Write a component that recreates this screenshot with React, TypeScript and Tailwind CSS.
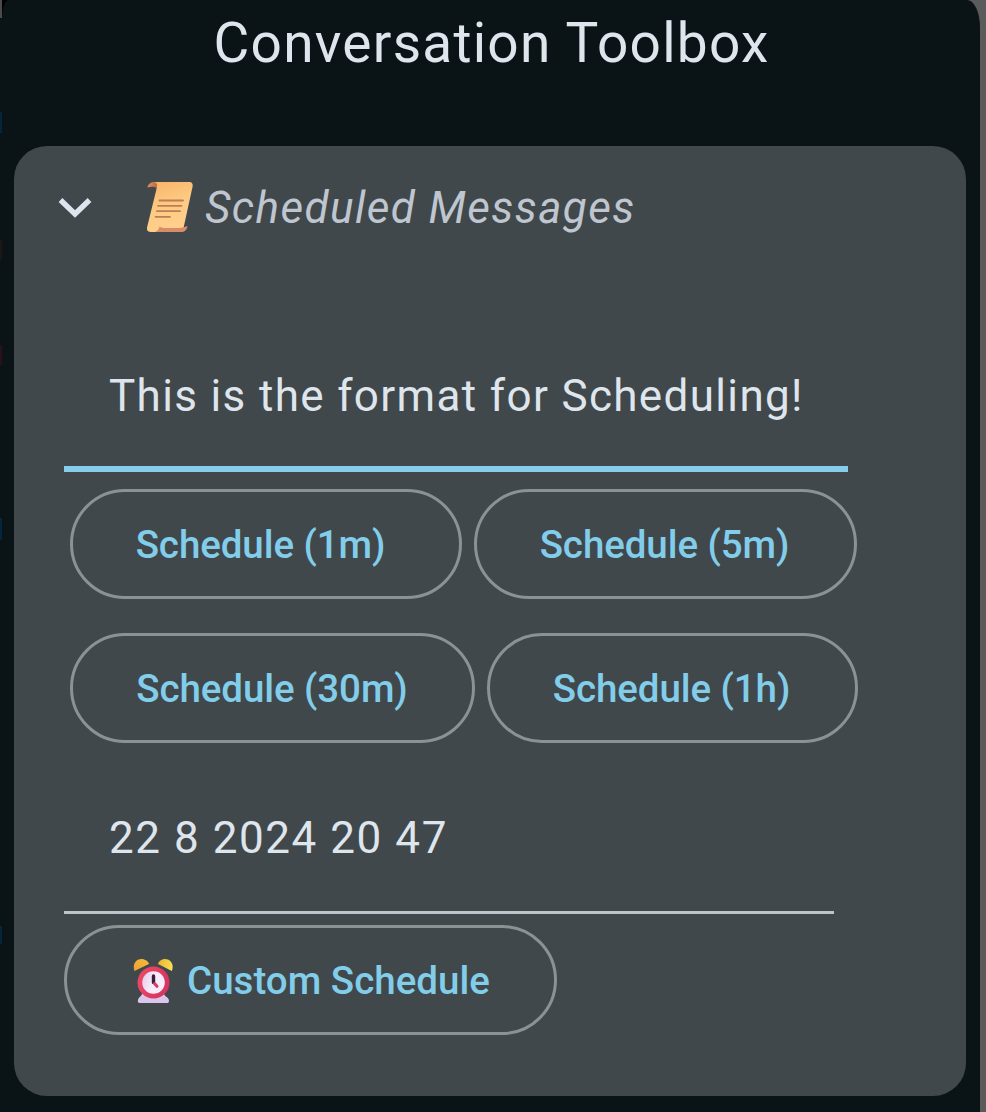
import type { ReactNode } from "react";

function ScrollIcon() {
  return (
    <svg className="h-[54px] w-[48px] shrink-0" viewBox="0 0 48 54">
      <defs>
        <linearGradient id="paper" x1="0" y1="0" x2="0.3" y2="1">
          <stop offset="0" stopColor="#f8b368" />
          <stop offset="0.5" stopColor="#fdc981" />
          <stop offset="1" stopColor="#ffd08c" />
        </linearGradient>
        <linearGradient id="curl" x1="0" y1="0" x2="1" y2="0">
          <stop offset="0" stopColor="#e58e5c" />
          <stop offset="1" stopColor="#b9684c" />
        </linearGradient>
      </defs>
      <path d="M9 2H43C46 2 47.3 4 46.5 7L37.500 48C36.500 51 34 52 31 52H5C1 52 0.5 49 1.4 46L10.5 9C11 5 9.5 3.5 6 3Z" fill="url(#paper)" />
      <path d="M1.5 7.5C2 4 5 2 8 2C11.5 2.5 11.5 5.5 10.8 8C7.5 6 4 6.500 1.500 7.500Z" fill="url(#curl)" />
      <path d="M13.500 46.500C16 48.500 20 48 24 48C30 48 36 48.500 41.500 46C41 50 38.500 52 35 52H9C12 51 13 49 13.500 46.500Z" fill="#d98c68" />
      <path d="M13.500 20.500H37M12 25.800H35.500M11 31.200H34M9.500 36.800H24" stroke="#bd7d55" strokeWidth="1.8" strokeLinecap="round" />
    </svg>
  );
}

function ClockIcon() {
  return (
    <svg className="h-[46px] w-[40px] shrink-0" viewBox="0 0 40 46">
      <defs>
        <linearGradient id="bell-left" x1="0" y1="1" x2="1" y2="0">
          <stop offset="0" stopColor="#ef9f32" />
          <stop offset="1" stopColor="#f3bd3c" />
        </linearGradient>
        <linearGradient id="bell-right" x1="0" y1="0.3" x2="1" y2="0.5">
          <stop offset="0" stopColor="#eab132" />
          <stop offset="1" stopColor="#fbe052" />
        </linearGradient>
        <linearGradient id="rim" x1="0" y1="0" x2="1" y2="0.4">
          <stop offset="0" stopColor="#ee4a66" />
          <stop offset="1" stopColor="#d83560" />
        </linearGradient>
        <linearGradient id="dial" x1="0" y1="0" x2="1" y2="0.3">
          <stop offset="0" stopColor="#e3c9ea" />
          <stop offset="0.6" stopColor="#f8edfa" />
        </linearGradient>
      </defs>
      <path d="M9 36H31C31.500 38.500 35.500 39 36 42.500C36 44.500 35.300 45 34 45H7C5 45 4.500 44 5 42C5.500 39 8.500 38.500 9 36Z" fill="#dac6ec" />
      <path d="M1.500 13C-1 6.500 3 1 8.500 1C12 1 15.500 3.500 16 6Z" fill="url(#bell-left)" />
      <path d="M38.800 13C41.500 6.500 37.500 1 32 1C28.500 1 25.500 3.500 25 6Z" fill="url(#bell-right)" />
      <circle cx="20.500" cy="24.500" r="16" fill="url(#rim)" />
      <circle cx="20.500" cy="24.500" r="11.300" fill="url(#dial)" />
      <path d="M20.500 18V24.500" stroke="#34203f" strokeWidth="3.400" strokeLinecap="round" />
      <path d="M21.500 25.500L24 28.300" stroke="#d83b60" strokeWidth="3" strokeLinecap="round" />
    </svg>
  );
}

function PillButton({ className, children }: { className: string; children: ReactNode }) {
  return (
    <button
      type="button"
      className={`flex h-[110px] shrink-0 items-center justify-center rounded-full border-[3px] border-[#8a9294] pt-[2px] text-[38.5px] leading-none font-medium tracking-[-0.08px] whitespace-nowrap text-[#81cdea] ${className}`}
    >
      {children}
    </button>
  );
}

export default function App() {
  return (
    <div className="flex h-[1112px] w-[986px] overflow-hidden bg-[linear-gradient(90deg,#000_50%,#5c5b5c_50%)] font-['Roboto',sans-serif]">
      <div className="flex w-[2px] shrink-0 flex-col bg-[#0a1417]">
        <div className="h-[18px] bg-[#4b4b4b]" />
        <div className="mt-[94px] h-[21px] bg-[#03263c]" />
        <div className="mt-[107px] h-[20px] bg-[#1c1712]" />
        <div className="mt-[85px] h-[20px] bg-[#2a1018]" />
        <div className="mt-[153px] h-[22px] bg-[#03263c]" />
        <div className="mt-[386px] h-[18px] bg-[#03263c]" />
      </div>
      <main className="flex h-[1112px] w-[978px] shrink-0 flex-col bg-[#0a1417] [border-radius:7px_13px_0_0/18px_27px_0_0]">
        <h1 className="flex h-[146px] shrink-0 justify-center pt-[11px] pl-[1px] text-[55px] leading-[64px] tracking-[1.26px] whitespace-nowrap text-[#dfe5ec]">
          Conversation Toolbox
        </h1>
        <section className="ml-[12px] flex h-[950px] w-[952px] shrink-0 flex-col rounded-[33px] bg-[#41484b]">
          <div className="flex h-[122px] shrink-0 items-center pl-[44px]">
            <svg className="h-[24px] w-[34px] shrink-0" viewBox="0 0 34 24" fill="none">
              <path d="M2.500 5L17 19L31.500 5" stroke="#dfe5ef" strokeWidth="5.400" />
            </svg>
            <div className="ml-[54px] flex items-center">
              <ScrollIcon />
              <span className="ml-[11px] pt-[2px] text-[44px] leading-[52px] tracking-[1.43px] whitespace-nowrap text-[#bfc6cf] italic">
                Scheduled Messages
              </span>
            </div>
          </div>
          <div className="ml-[50px] flex h-[204px] w-[784px] shrink-0 items-end border-b-[6px] border-[#85cdea] pb-[44px] pl-[45px] text-[44px] leading-[52px] tracking-[1.35px] whitespace-nowrap text-[#dfe5ec]">
            This is the format for Scheduling!
          </div>
          <div className="mt-[17px] ml-[56px] flex gap-[12px]">
            <PillButton className="w-[392px] pr-[11px]">Schedule (1m)</PillButton>
            <PillButton className="w-[383px] pr-[2px]">Schedule (5m)</PillButton>
          </div>
          <div className="mt-[34px] ml-[56px] flex gap-[12px]">
            <PillButton className="w-[405px] pr-[1px]">Schedule (30m)</PillButton>
            <PillButton className="w-[371px] pr-[2px]">Schedule (1h)</PillButton>
          </div>
          <div className="ml-[50px] flex h-[171px] w-[770px] shrink-0 items-end border-b-[3px] border-[#bcc5c9] pb-[47px] pl-[45px] text-[44px] leading-[52px] tracking-[1.55px] whitespace-nowrap text-[#dfe5ec]">
            22 8 2024 20 47
          </div>
          <div className="mt-[11px] ml-[50px] flex">
            <PillButton className="w-[493px] pl-[2px]">
              <ClockIcon />
              <span className="ml-[14px] tracking-[0.02px]">Custom Schedule</span>
            </PillButton>
          </div>
        </section>
      </main>
    </div>
  );
}
